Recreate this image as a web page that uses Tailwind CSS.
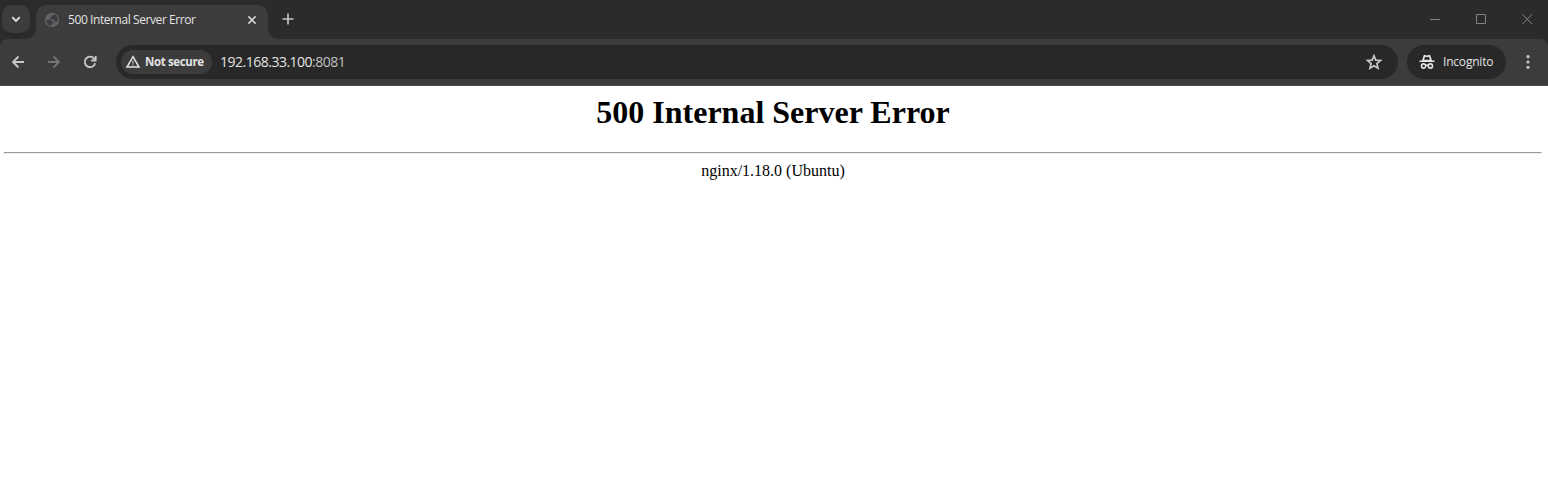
<!DOCTYPE html>
<html lang="en">
<head>
<meta charset="utf-8">
<title>500 Internal Server Error</title>
<script src="https://cdn.jsdelivr.net/npm/@tailwindcss/browser@4"></script>
</head>
<body class="flex h-screen flex-col overflow-hidden bg-white">
<header class="shrink-0 bg-[#2b2b2b] font-['Open_Sans','Noto_Sans',sans-serif] text-[#e3e3e3]">
  <div class="flex h-[39px] items-end bg-[#2b2b2b]">
    <button class="mb-1.5 ml-0.5 flex size-7 items-center justify-center rounded-[10px] bg-[#3c3c3c]">
      <svg class="size-4" viewBox="0 0 16 16" fill="none" stroke="#e3e3e3" stroke-width="1.8"><path d="M4.300 6.200 8 9.900l3.700-3.700"/></svg>
    </button>
    <div class="-ml-1 flex h-[34px] items-end">
      <svg class="size-2.5" viewBox="0 0 10 10"><path fill="#3c3c3c" d="M10 0v10H0A10 10 0 0 0 10 0"/></svg>
      <div class="flex h-full w-[232px] items-center rounded-t-[10px] bg-[#3c3c3c] pr-2 pl-2 pb-[5px]">
        <svg class="size-4 shrink-0" viewBox="0 0 16 16"><circle cx="8" cy="8" r="7.200" fill="#5f6368"/><path fill="#3c3c3c" d="M9.600 2.300C9.600 3.400 8.700 4 7.500 4v1.300q0 .8-1.200.8v1.400h3.200q1 0 1 1.200v.9h1.900q1 0 1.400-.8A5.700 5.700 0 0 0 9.600 2.300M2.300 8.100H6q1.900 0 1.900 1.900H10v1.500H8.300q-.9 0-.9 1v1.300A5.700 5.700 0 0 1 2.300 8.100"/></svg>
        <span class="ml-2 w-[160px] text-[12px] leading-4 tracking-[-0.42px] whitespace-nowrap">500 Internal Server Error</span>
        <button class="ml-4 flex size-4 items-center justify-center">
          <svg class="size-4" viewBox="0 0 16 16" stroke="#d8d8d8" stroke-width="1.500"><path d="m4.400 4.400 7.200 7.200m0-7.200-7.200 7.200"/></svg>
        </button>
      </div>
      <svg class="size-2.5" viewBox="0 0 10 10"><path fill="#3c3c3c" d="M0 0v10h10A10 10 0 0 1 0 0"/></svg>
    </div>
    <svg class="mb-3 ml-0.5 size-4" viewBox="0 0 16 16" stroke="#c7c7c7" stroke-width="1.600"><path d="M8 2.500v11M2.500 8h11"/></svg>
    <div class="mr-[15px] mb-[14px] ml-auto flex w-[103px] items-center justify-between">
      <svg class="size-[11px]" viewBox="0 0 11 11" stroke="#838383"><path d="M0 5.500h10"/></svg>
      <svg class="size-[11px]" viewBox="0 0 11 11" fill="none" stroke="#838383"><path d="M.5.5h9v9h-9z"/></svg>
      <svg class="size-[11px]" viewBox="0 0 11 11" stroke="#838383"><path d="m.5.5 9.500 9.500m0-9.500L.5 10"/></svg>
    </div>
  </div>
  <div class="flex h-[47px] items-center rounded-t-[8px] border-b border-[#4a4a4a] bg-[#3c3c3c] pr-2">
    <svg class="ml-2 size-5" viewBox="0 0 20 20" fill="none" stroke="#c7c7c7" stroke-width="1.800"><path d="M16 10H5m5.500-5.500L5 10l5.500 5.500"/></svg>
    <svg class="ml-4 size-5" viewBox="0 0 20 20" fill="none" stroke="#757575" stroke-width="1.800"><path d="M4 10h11M9.500 4.500 15 10l-5.500 5.500"/></svg>
    <svg class="ml-4 size-5" viewBox="0 0 20 20" fill="none" stroke="#c7c7c7" stroke-width="1.800"><path d="M15.200 11.200A5.300 5.300 0 1 1 14.200 6.600L15.500 8M15.700 4v4.500h-4.500"/></svg>
    <div class="ml-4 flex h-[34px] w-[1282px] items-center rounded-full bg-[#282828] pr-3.5 pl-[5px]">
      <div class="flex h-6 w-[91px] items-center rounded-full bg-[#3c3c3c] pl-1">
        <svg class="size-4 shrink-0" viewBox="0 0 16 16" fill="none" stroke="#e3e3e3" stroke-width="1.500"><path d="M8 2.700 14 13H2z"/><path d="M8 6.500v3.300m0 .7v1.300" stroke="#b0b0b0" stroke-width="1.300"/></svg>
        <span class="ml-1 text-[11.5px] leading-4 font-bold tracking-[-0.38px] whitespace-nowrap">Not secure</span>
      </div>
      <span class="ml-2 text-[14px] leading-5 tracking-[-0.5px] whitespace-nowrap">192.168.33.100<span class="text-[#c0c0c0]">:8081</span></span>
      <svg class="ml-auto size-5" viewBox="0 0 20 20" fill="none" stroke="#c7c7c7" stroke-width="1.700"><path d="m10 3.700 1.800 4.400 4.700.4-3.600 3.100 1.100 4.600-4-2.500-4 2.500 1.100-4.600-3.600-3.100 4.700-.4z"/></svg>
    </div>
    <div class="ml-[9px] flex h-[34px] w-[99px] items-center rounded-full bg-[#282828] pl-2.5">
      <svg class="size-5" viewBox="0 0 20 20"><path fill="#e3e3e3" d="M5 8.500 6.600 3.600q.3-1 1.300-.7L10 3.500l2.100-.6q1-.3 1.300.7L15 8.500h2.500V10h-15V8.500z"/><path fill="#282828" d="m7.100 7.800.9-3 2 .5 2-.5.9 3z"/><path fill="none" stroke="#e3e3e3" stroke-width="1.600" d="M8.700 14a2.100 2.100 0 1 1-4.200 0 2.100 2.100 0 0 1 4.200 0Zm6.800 0a2.100 2.100 0 1 1-4.200 0 2.100 2.100 0 0 1 4.200 0Zm-6.800-.5q1.300-.8 2.600 0"/></svg>
      <span class="ml-1.5 text-[12px] leading-4 tracking-[-0.2px]">Incognito</span>
    </div>
    <svg class="mr-0.5 ml-auto size-5" viewBox="0 0 20 20" fill="#c7c7c7"><circle cx="10" cy="4.700" r="1.600"/><circle cx="10" cy="10" r="1.600"/><circle cx="10" cy="15.300" r="1.600"/></svg>
  </div>
</header>
<main class="pr-1.5 pl-1 text-center font-['Liberation_Serif',serif] text-black">
  <h1 class="pt-2 text-[32px] leading-[37px] font-bold">500 Internal Server Error</h1>
  <hr class="mt-[21px] h-0.5 border border-t-[#9a9a9a] border-r-[#eeeeee] border-b-[#eeeeee] border-l-[#9a9a9a]">
  <p class="mt-2 text-[16px] leading-[18px]">nginx/1.18.0 (Ubuntu)</p>
</main>
</body>
</html>
